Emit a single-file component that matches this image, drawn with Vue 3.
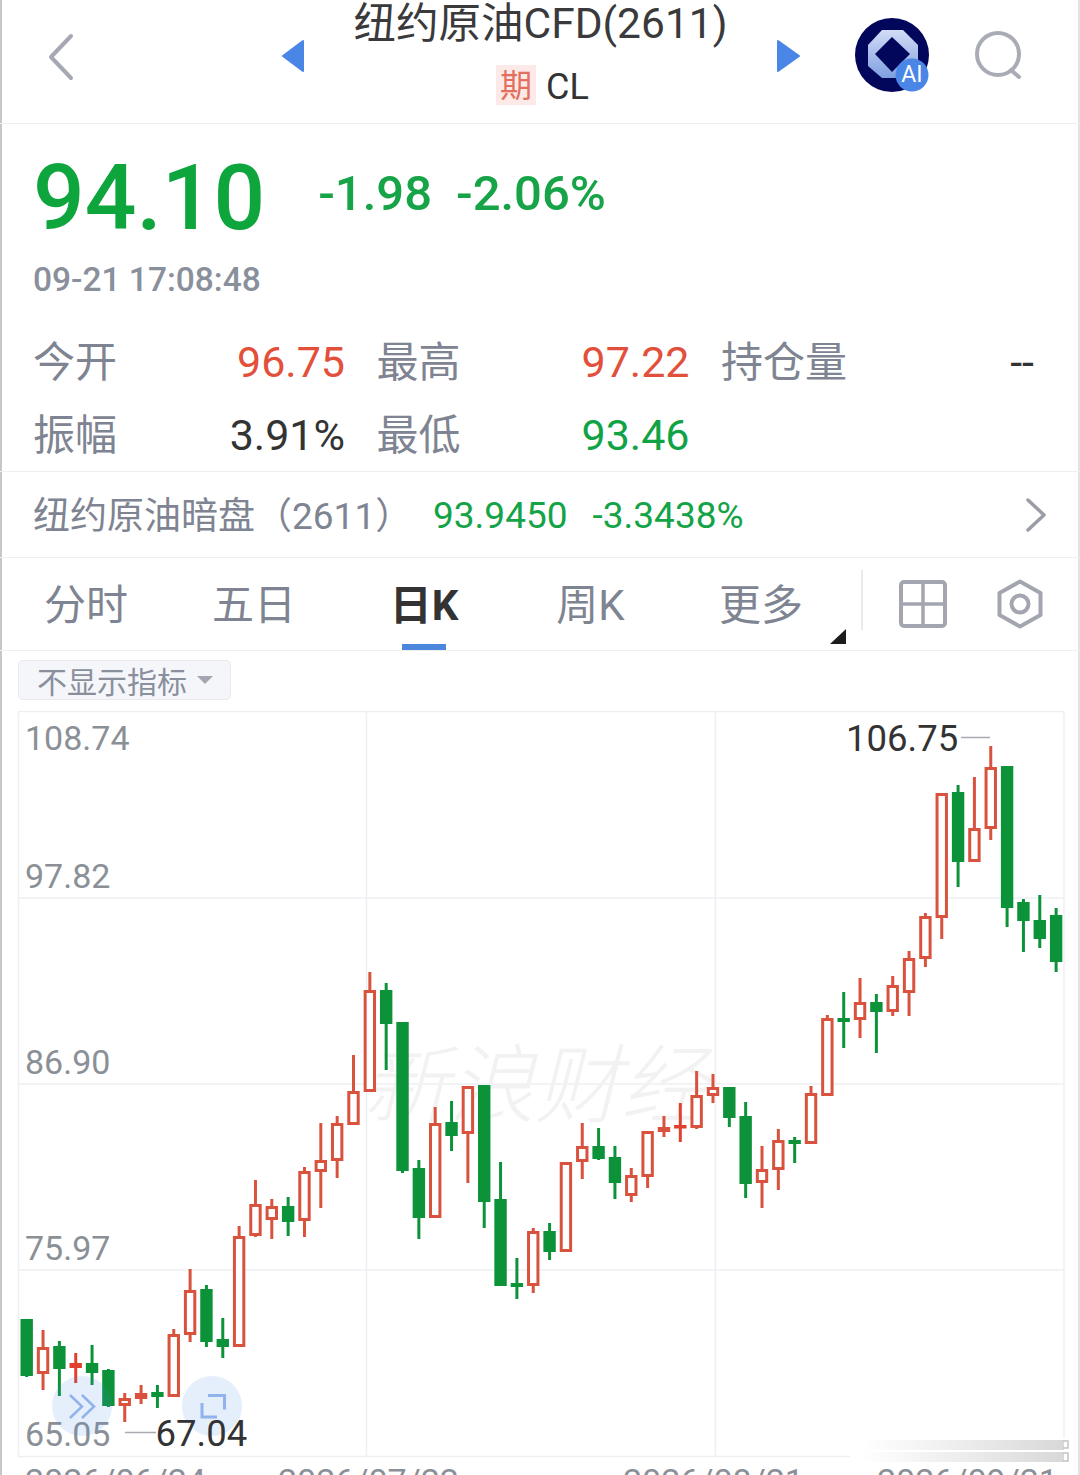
<template>
  <div class="page">
    <header class="top">
      <svg class="back" width="30" height="48" viewBox="0 0 30 48">
        <path d="M25 3 5 24l20 21" fill="none" stroke="#a6a9b3" stroke-width="4" stroke-linecap="round" stroke-linejoin="round" />
      </svg>
      <svg class="arrow" width="22" height="34" viewBox="0 0 22 34">
        <path d="M21 2v30L1 17z" fill="#4a86e6" stroke="#4a86e6" stroke-width="2" stroke-linejoin="round" />
      </svg>
      <div class="title">
        <div class="name">纽约原油CFD(2611)</div>
        <div class="sub"><span class="tag">期</span><span class="code">CL</span></div>
      </div>
      <svg class="arrow" width="24" height="34" viewBox="0 0 24 34">
        <path d="M1 2v30l21-15z" fill="#4a86e6" stroke="#4a86e6" stroke-width="2" stroke-linejoin="round" />
      </svg>
      <svg class="logo" width="76" height="76" viewBox="0 0 76 76">
        <defs>
          <linearGradient id="ring" x1="0" y1="0" x2="0" y2="1">
            <stop offset="0" stop-color="#d3dcf6" />
            <stop offset="1" stop-color="#7f9fe0" />
          </linearGradient>
        </defs>
        <circle cx="37" cy="38" r="37" fill="#03075c" />
        <path d="M27 14h21l15 15v21L48 62H27L13 50V29z" fill="url(#ring)" transform="translate(0 -1)" />
        <path d="M37 20 55 37 37 55 20 37z" fill="#03075c" />
        <circle cx="57" cy="58" r="16.5" fill="#4a86e6" />
        <text x="57" y="65" class="ai">AI</text>
      </svg>
      <svg class="search" width="52" height="52" viewBox="0 0 52 52">
        <circle cx="24" cy="24" r="21" fill="none" stroke="#a9acb5" stroke-width="4" />
        <path d="m37 40 8 7" fill="none" stroke="#a9acb5" stroke-width="4" stroke-linecap="round" />
      </svg>
    </header>

    <section class="quote">
      <div class="price-row">
        <span class="price">94.10</span>
        <span class="change">-1.98</span>
        <span class="change">-2.06%</span>
      </div>
      <div class="time">09-21 17:08:48</div>
    </section>

    <section class="stats">
      <div v-for="s in stats" :key="s.label" class="stat">
        <span class="stat-label">{{ s.label }}</span>
        <span class="stat-value" :class="s.cls">{{ s.value }}</span>
      </div>
    </section>

    <section class="dark">
      <span class="dark-name">纽约原油暗盘（2611）</span>
      <span class="dark-num">93.9450</span>
      <span class="dark-num">-3.3438%</span>
      <svg class="dark-go" width="22" height="36" viewBox="0 0 22 36">
        <path d="m3 3 16 15L3 33" fill="none" stroke="#9a9da6" stroke-width="3.5" stroke-linecap="round" stroke-linejoin="round" />
      </svg>
    </section>

    <nav class="tabs">
      <div class="tab-list">
        <div v-for="t in tabs" :key="t" class="tab" :class="{ active: t === '日K', more: t === '更多' }">{{ t }}</div>
      </div>
      <div class="tab-split"></div>
      <svg class="tab-icon" width="48" height="48" viewBox="0 0 48 48">
        <rect x="2" y="2" width="44" height="44" rx="3" fill="none" stroke="#a3a6b0" stroke-width="4" />
        <path d="M24 2v44M2 24h44" stroke="#a3a6b0" stroke-width="3.5" />
      </svg>
      <svg class="tab-icon hex" width="46" height="50" viewBox="0 0 46 50">
        <path d="M23 2.5 43.5 14v22L23 47.5 2.500 36V14z" fill="none" stroke="#a3a6b0" stroke-width="4" stroke-linejoin="round" />
        <circle cx="23" cy="25" r="8.500" fill="none" stroke="#a3a6b0" stroke-width="4" />
      </svg>
    </nav>

    <div class="toolbar">
      <div class="chip">不显示指标<i class="chip-caret"></i></div>
    </div>

    <svg class="chart" width="1080" height="764" viewBox="0 711 1080 764">
      <g stroke="#eeeff3" stroke-width="1.500" fill="none">
        <rect x="18.500" y="711.500" width="1045.500" height="745" />
        <path d="M366.500 711v745M715.500 711v745M18 898h1046M18 1084h1046M18 1270h1046" />
      </g>
      <text x="363" y="1116" class="mark">新浪财经</text>

      <g v-for="c in candles" :key="c.x">
        <line :x1="c.x" :x2="c.x" :y1="c.high" :y2="c.low" :stroke="c.color" stroke-width="3" />
        <rect
          :x="c.x - 4.700"
          :y="c.top + 1.500"
          width="9.400"
          :height="Math.max(c.bottom - c.top - 3, 0.500)"
          :fill="c.up ? '#fff' : c.color"
          :stroke="c.color"
          stroke-width="3"
        />
      </g>

      <text v-for="l in yLabels" :key="l.text" x="25" :y="l.y" class="axis">{{ l.text }}</text>
      <text v-for="l in xLabels" :key="l.text" :x="l.x" y="1493" class="axis">{{ l.text }}</text>

      <text x="846" y="751" class="extreme">106.75</text>
      <line x1="961" x2="990" y1="737.500" y2="737.500" stroke="#a8abb0" stroke-width="1.500" />
      <line x1="125" x2="156" y1="1432.500" y2="1432.500" stroke="#a8abb0" stroke-width="1.500" />

      <circle cx="82" cy="1406" r="30" fill="#4a86e6" fill-opacity="0.14" />
      <path d="m70 1395 12 11.500-12 11.500M82 1395l12 11.500-12 11.500" fill="none" stroke="#8fb3ea" stroke-width="2.500" />
      <circle cx="212" cy="1406" r="30" fill="#4a86e6" fill-opacity="0.14" />
      <path d="M208 1395.500h16.500v14M202 1403v14h15" fill="none" stroke="#8fb3ea" stroke-width="3" />
      <text x="155.500" y="1446" class="extreme">67.04</text>

      <defs>
        <linearGradient id="fade" x1="0" y1="0" x2="1" y2="0">
          <stop offset="0" stop-color="#dcdcdc" stop-opacity="0" />
          <stop offset="1" stop-color="#d8d8d8" />
        </linearGradient>
      </defs>
      <rect x="850" y="1438" width="218" height="26" fill="#fff" />
      <rect x="860" y="1440" width="204" height="10" fill="url(#fade)" />
      <rect x="860" y="1452" width="204" height="10" fill="url(#fade)" />
      <path d="M1063 1441h5v7h-5M1063 1453h5v8h-5" fill="none" stroke="#c4c4c4" stroke-width="1.500" />
    </svg>
  </div>
</template>

<script setup>
const stats = [
  { label: '今开', value: '96.75', cls: 'red' },
  { label: '最高', value: '97.22', cls: 'red' },
  { label: '持仓量', value: '--', cls: 'dark-text' },
  { label: '振幅', value: '3.91%', cls: 'dark-text' },
  { label: '最低', value: '93.46', cls: 'green' },
]

const tabs = ['分时', '五日', '日K', '周K', '更多']

const yLabels = [
  { text: '108.74', y: 750 },
  { text: '97.82', y: 888 },
  { text: '86.90', y: 1074 },
  { text: '75.97', y: 1260 },
  { text: '65.05', y: 1446 },
]

const xLabels = [
  { text: '2026/06/24', x: 25 },
  { text: '2026/07/22', x: 278 },
  { text: '2026/08/21', x: 623 },
  { text: '2026/09/21', x: 877 },
]

// [涨?, 实体上, 实体下, 上影, 下影] in page pixels, read off the chart
const raw = [
  [0, 1319, 1376, 1319, 1377], [1, 1347, 1374, 1330, 1390], [0, 1346, 1369, 1341, 1396], [2, 1363, 1368, 1353, 1383],
  [0, 1363, 1373, 1345, 1385], [0, 1370, 1406, 1369, 1407], [1, 1398, 1406, 1393, 1422], [1, 1393, 1399, 1385, 1404],
  [0, 1392, 1397, 1385, 1408], [1, 1334, 1397, 1329, 1397], [1, 1290, 1335, 1269, 1342], [0, 1289, 1342, 1285, 1347],
  [0, 1339, 1347, 1318, 1358], [1, 1236, 1347, 1226, 1347], [1, 1204, 1236, 1180, 1237], [1, 1206, 1220, 1199, 1239],
  [0, 1206, 1222, 1197, 1236], [1, 1171, 1221, 1167, 1237], [1, 1160, 1172, 1123, 1208], [1, 1123, 1161, 1116, 1178],
  [1, 1091, 1125, 1055, 1125], [1, 990, 1092, 972, 1092], [0, 990, 1024, 983, 1070], [0, 1022, 1171, 1022, 1173],
  [0, 1168, 1218, 1160, 1239], [1, 1123, 1218, 1107, 1218], [0, 1122, 1136, 1101, 1151], [1, 1086, 1134, 1086, 1183],
  [0, 1085, 1202, 1085, 1228], [0, 1199, 1286, 1162, 1286], [0, 1283, 1287, 1258, 1299], [1, 1231, 1286, 1228, 1293],
  [0, 1231, 1252, 1223, 1260], [1, 1162, 1252, 1162, 1252], [1, 1146, 1162, 1123, 1179], [0, 1146, 1159, 1128, 1160],
  [0, 1157, 1183, 1146, 1199], [1, 1175, 1196, 1168, 1202], [1, 1131, 1177, 1131, 1188], [1, 1127, 1132, 1116, 1137],
  [2, 1125, 1128, 1103, 1142], [1, 1095, 1128, 1071, 1129], [1, 1087, 1096, 1074, 1103], [0, 1087, 1118, 1087, 1127],
  [0, 1116, 1184, 1102, 1198], [1, 1169, 1183, 1146, 1208], [1, 1140, 1170, 1129, 1190], [0, 1140, 1144, 1137, 1163],
  [1, 1093, 1144, 1086, 1144], [1, 1018, 1096, 1015, 1096], [0, 1018, 1022, 992, 1048], [1, 1002, 1020, 978, 1038],
  [0, 1002, 1012, 994, 1053], [1, 985, 1012, 976, 1016], [1, 958, 993, 951, 1016], [1, 916, 959, 913, 967],
  [1, 793, 918, 793, 939], [0, 792, 862, 785, 887], [1, 828, 862, 777, 862], [1, 767, 829, 746, 840],
  [0, 766, 908, 766, 927], [0, 902, 921, 899, 952], [0, 920, 939, 895, 948], [0, 915, 962, 908, 972],
]

const candles = raw.map(([kind, top, bottom, high, low], i) => ({
  x: 26.7 + i * 16.34,
  up: kind === 1,
  color: kind === 0 ? '#0c9339' : kind === 2 ? '#e0402c' : '#d8523e',
  top,
  bottom,
  high,
  low,
}))
</script>

<style>
html,
body {
  margin: 0;
  background: #fff;
  overflow: hidden;
}
</style>

<style scoped>
.page {
  width: 1080px;
  height: 1475px;
  overflow: hidden;
  background: #fff;
  box-shadow: inset 2px 0 #c6c6c6, inset -2px 0 #e2e2e2;
  font-family: Roboto, "Noto Sans CJK SC", sans-serif;
  color: #333;
}

.top {
  height: 123px;
  display: grid;
  grid-template-columns: 282px 22px 473px 24px 130px 120px;
  align-items: center;
  border-bottom: 1px solid #eeeff1;
}

.back {
  margin: -10px 0 0 46px;
}

.arrow {
  margin-top: -12px;
}

.logo {
  margin: -13px 0 0 54px;
}

.search {
  margin: -12px 0 0 43px;
}

.title {
  align-self: start;
  text-align: center;
}

.name {
  height: 48px;
  line-height: 48px;
  font-size: 42.500px;
  white-space: nowrap;
  color: #3a3a3c;
}

.sub {
  margin-top: 15px;
  padding-left: 4px;
  display: flex;
  justify-content: center;
  align-items: center;
  gap: 10px;
}

.tag {
  width: 40px;
  height: 40px;
  line-height: 42px;
  background: #fde9e7;
  color: #e2705f;
  font-size: 32px;
}

.code {
  font-size: 36px;
  line-height: 40px;
  margin-top: 4px;
}

.ai {
  font-size: 23px;
  fill: #fff;
  text-anchor: middle;
  font-family: Roboto, sans-serif;
}

.quote {
  padding: 28px 0 0 33px;
}

.price-row {
  display: flex;
  align-items: center;
  height: 92px;
  color: #17a347;
}

.price {
  font-size: 91px;
  font-weight: 500;
  line-height: 92px;
  color: #0ea53c;
  margin-right: 53px;
}

.change {
  font-size: 49px;
  font-weight: 500;
  line-height: 92px;
  margin: -8px 24px 0 0;
}

.time {
  margin-top: 16px;
  height: 40px;
  line-height: 40px;
  font-size: 33.500px;
  font-weight: 500;
  color: #8a8f9c;
}

.stats {
  margin-top: 25px;
  padding: 0 46px 0 33px;
  display: grid;
  grid-template-columns: 312px 313px 313px;
  column-gap: 31.500px;
  grid-auto-rows: 73px;
  border-bottom: 1px solid #eeeff1;
}

.stat {
  display: flex;
  justify-content: space-between;
  align-items: center;
  font-size: 43px;
}

.stat-label {
  color: #7e8491;
  font-size: 42px;
  margin-bottom: 6px;
}

.red {
  color: #e2503c;
}

.green {
  color: #10a345;
}

.dark-text {
  color: #333;
}

.dark {
  height: 85px;
  padding-left: 33px;
  display: flex;
  align-items: center;
  font-size: 37px;
  border-bottom: 1px solid #eeeff1;
  position: relative;
}

.dark-name {
  color: #7e8491;
  width: 400px;
  margin-bottom: 3px;
  white-space: nowrap;
}

.dark-num {
  color: #14a347;
  margin: 1px 25px 0 0;
}

.dark-go {
  position: absolute;
  left: 1025px;
  top: 25px;
}

.tabs {
  height: 92px;
  display: flex;
  align-items: center;
  border-bottom: 1px solid #eeeff1;
}

.tab-list {
  margin-left: 2px;
  display: grid;
  grid-template-columns: 168px 168px 172px 161px 180px;
}

.tab {
  position: relative;
  height: 92px;
  line-height: 96px;
  text-align: center;
  font-size: 42px;
  color: #7e8491;
}

.tab.active {
  font-weight: 700;
  color: #333;
}

.tab.active::after {
  content: "";
  position: absolute;
  left: 64px;
  bottom: 0;
  width: 44px;
  height: 6px;
  background: #4a86dc;
}

.tab.more::after {
  content: "";
  position: absolute;
  right: 5px;
  bottom: 6px;
  border-left: 16px solid transparent;
  border-bottom: 15px solid #1c1c1c;
}

.tab-split {
  width: 2px;
  height: 60px;
  margin: -8px 0 0 10px;
  background: #e9eaee;
}

.tab-icon {
  margin-left: 36px;
}

.tab-icon.hex {
  margin-left: 50px;
}

.toolbar {
  height: 60px;
  padding: 9px 0 0 18px;
  box-sizing: border-box;
}

.chip {
  width: 213px;
  height: 40px;
  box-sizing: border-box;
  padding-left: 18px;
  display: flex;
  align-items: center;
  background: #f5f6fa;
  border: 1.500px solid #e7e9ef;
  border-radius: 5px;
  font-size: 30px;
  color: #8a8f9c;
}

.chip-caret {
  margin-left: 10px;
  border-left: 8px solid transparent;
  border-right: 8px solid transparent;
  border-top: 8px solid #a3a6b0;
}

.chart {
  display: block;
}

.mark {
  font-family: "Noto Sans CJK SC", sans-serif;
  font-size: 86px;
  font-weight: 300;
  font-style: italic;
  fill: #f2f2f3;
}

.axis {
  font-size: 34px;
  fill: #8b9097;
}

.extreme {
  font-size: 36.500px;
  fill: #333;
}
</style>
